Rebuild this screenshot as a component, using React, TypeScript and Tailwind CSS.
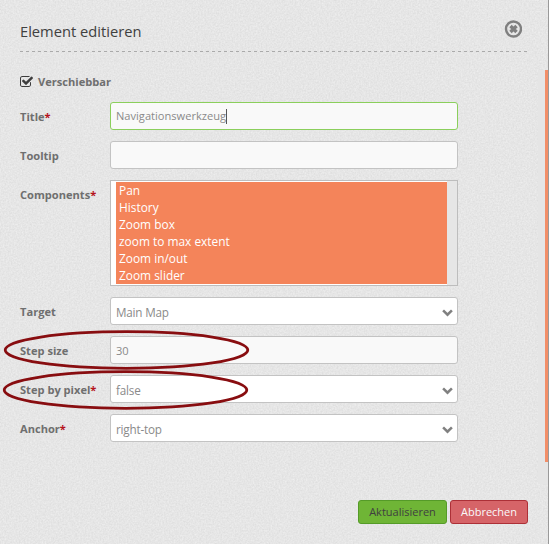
import React from "react";

const components = ["Pan", "History", "Zoom box", "zoom to max extent", "Zoom in/out", "Zoom slider"];

function Linen() {
  return (
    <svg className="absolute inset-0 h-full w-full" aria-hidden="true">
      <filter id="linen" x="0" y="0" width="100%" height="100%" colorInterpolationFilters="sRGB">
        <feTurbulence type="fractalNoise" baseFrequency="0.62" numOctaves="2" seed="4" />
        <feColorMatrix values="0.09 0 0 0 0.856  0.09 0 0 0 0.856  0.09 0 0 0 0.856  0 0 0 0 1" />
      </filter>
      <rect width="100%" height="100%" filter="url(#linen)" />
    </svg>
  );
}

function CheckIcon() {
  return (
    <svg viewBox="0 0 1664 1664" className="mt-[-1px] h-[13px] w-[13px] shrink-0" fill="#3d3d3d">
      <path d="M1408 930v318q0 119-84.5 203.5T1120 1536H288q-119 0-203.5-84.5T0 1248V416q0-119 84.5-203.5T288 128h832q63 0 117 25 15 7 18 23 3 17-9 29l-49 49q-10 10-23 10-3 0-9-2-23-6-45-6H288q-66 0-113 47t-47 113v832q0 66 47 113t113 47h832q66 0 113-47t47-113V994q0-13 9-22l64-64q10-10 23-10 6 0 12 3 20 8 20 29zm231-489l-814 814q-24 24-57 24t-57-24L281 825q-24-24-24-57t24-57l110-110q24-24 57-24t57 24l263 263 647-647q24-24 57-24t57 24l110 110q24 24 24 57t-24 57z" />
    </svg>
  );
}

function CloseIcon() {
  return (
    <svg viewBox="0 0 18 18" className="h-[18px] w-[18px]" fill="none" stroke="#808080">
      <circle cx="9.5" cy="9" r="7.5" strokeWidth="2.4" />
      <path d="M6.5 6l6 6M12.5 6l-6 6" strokeWidth="3.4" />
    </svg>
  );
}

function Row({ label, required, children }: { label: string; required?: boolean; children: React.ReactNode }) {
  return (
    <div className="flex">
      <div className="w-[90px] shrink-0 pt-[7px] text-[11.1px] leading-4 font-bold whitespace-nowrap text-[#6f6f6f]">
        {label}
        {required && <span className="text-[#b5121b]">*</span>}
      </div>
      {children}
    </div>
  );
}

const box = "flex h-7 w-[348px] items-center rounded-[3px] border pl-[5px] pr-[4px] text-[#8a8a8a] ";

function Input({ value = "", focused }: { value?: string; focused?: boolean }) {
  return (
    <div className={box + "bg-[#f9f9f9] text-[11.1px] " + (focused ? "border-[#8bcf5c]" : "border-[#c3c3c3]")}>
      <span className={focused ? "" : "pt-[2px]"}>{value}</span>
      {focused && <span className="h-[15px] w-px bg-[#555]" />}
    </div>
  );
}

function Select({ value }: { value: string }) {
  return (
    <div className={box + "justify-between border-[#c3c3c3] bg-white text-[11.7px] tracking-[-0.2px]"}>
      <span className="pt-[3px]">{value}</span>
      <svg viewBox="0 0 11 8" className="mt-[3px] h-2 w-[11px]" fill="none" stroke="#808080" strokeWidth="2.6">
        <path d="M1.1 1.4l4.4 4.2 4.4-4.2" />
      </svg>
    </div>
  );
}

export default function App() {
  return (
    <div className="relative h-[544px] w-[549px] overflow-hidden bg-[#e5e5e5] font-['Open_Sans','Noto_Sans',sans-serif]">
      <Linen />
      <div className="relative flex h-full border-r border-[#999]">
        <main className="ml-5 w-[508px]">
          <header className="flex h-[51px] items-start justify-between pt-5 pr-[6px]">
            <h1 className="text-[14.7px] leading-[23px] text-[#404040]">Element editieren</h1>
            <CloseIcon />
          </header>
          <div className="h-px w-full bg-[repeating-linear-gradient(90deg,#aaa_0_3px,transparent_3px_6px)]" />
          <div className="flex h-[50px] items-center gap-[5px] pt-[10px] text-[11.1px] font-bold text-[#6f6f6f]">
            <CheckIcon />
            <span>Verschiebbar</span>
          </div>
          <div className="flex flex-col gap-[11px]">
            <Row label="Title" required><Input value="Navigationswerkzeug" focused /></Row>
            <Row label="Tooltip"><Input /></Row>
            <Row label="Components" required>
              <div className="flex h-[106px] w-[348px] border border-[#bdbdbd] bg-white">
                <div className="my-px ml-[5px] h-[102px] w-[331px] bg-[#f4845a] pl-[3px] text-[11.9px] leading-[17px] text-white">
                  {components.map((c) => <div key={c}>{c}</div>)}
                </div>
                <div className="flex-1 bg-[#e6e6e6]" />
              </div>
            </Row>
            <Row label="Target"><Select value="Main Map" /></Row>
            <Row label="Step size"><Input value="30" /></Row>
            <Row label="Step by pixel" required><Select value="false" /></Row>
            <Row label="Anchor" required><Select value="right-top" /></Row>
          </div>
          <footer className="mt-[58px] flex justify-end gap-[3px] text-[11px]">
            <button className="h-6 w-[89px] rounded-[3px] border border-[#559b28] bg-[#6fb536] text-[#404040]">Aktualisieren</button>
            <button className="h-6 w-[78px] rounded-[3px] border border-[#ac3037] bg-[#d66468] text-[#fafafa]">Abbrechen</button>
          </footer>
        </main>
        <div className="mt-[70px] ml-[10px] flex h-[414px] w-[10px] justify-end bg-[#e5e5e5]">
          <div className="h-[392px] w-[3px] bg-[#f28e68]" />
        </div>
      </div>
      <svg className="absolute top-0 left-0 h-[544px] w-[549px]" fill="none" stroke="#880d10" strokeWidth="2.8">
        <ellipse cx="126.5" cy="350" rx="121.3" ry="18.3" />
        <ellipse cx="125.5" cy="390" rx="121.3" ry="18.3" />
      </svg>
    </div>
  );
}
